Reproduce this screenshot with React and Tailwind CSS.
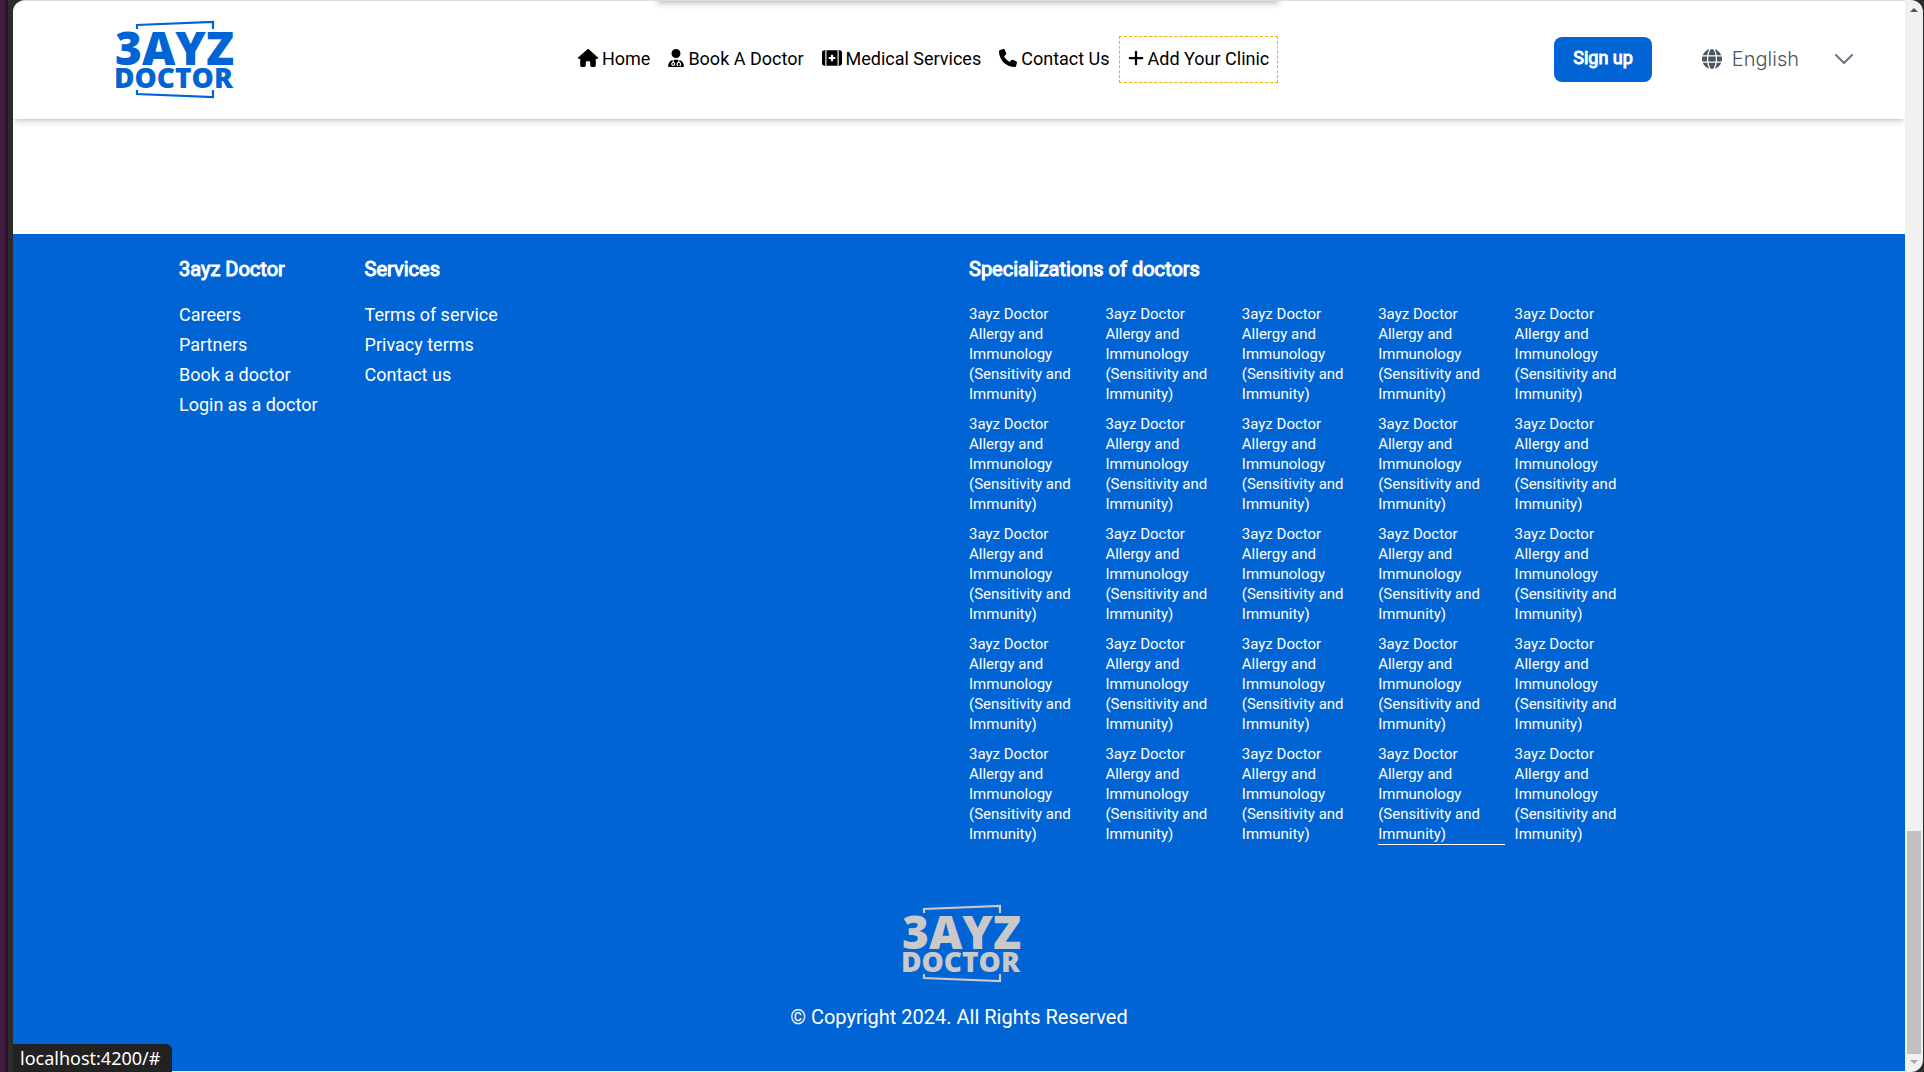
import React from "react";
import { FaHouse, FaUserDoctor, FaKitMedical, FaPhone, FaPlus, FaGlobe } from "react-icons/fa6";

const specializations = Array.from({ length: 25 }, (_, i) => ({
  id: i,
  label: "3ayz Doctor Allergy and Immunology (Sensitivity and Immunity)",
}));

function Logo({ className }) {
  return (
    <svg viewBox="0 0 126 80" className={className} role="img" aria-label="3ayz Doctor">
      <g fill="none" stroke="currentColor" strokeWidth="2.2">
        <path d="M28 10V6L104 3V10" />
        <path d="M28 71V75L104 78V71" />
      </g>
      <g fill="currentColor" fontFamily="'Open Sans', sans-serif" fontWeight="800">
        <text x="6" y="46" fontSize="46">3AYZ</text>
        <text x="5" y="69" fontSize="28">DOCTOR</text>
      </g>
    </svg>
  );
}

function NavLink({ icon: Icon, iconWidth, children, boxed }) {
  return (
    <a
      href="#"
      className={
        boxed
          ? "flex items-start gap-1 border border-dashed border-yellow-500 px-2 pt-2 pb-[10px]"
          : "flex items-start gap-1 px-[9px] pt-[9px] pb-[11px]"
      }
    >
      <span className="flex h-[27px] items-center">
        <Icon className={`h-[18px] ${iconWidth}`} />
      </span>
      <span className="leading-[27px]">{children}</span>
    </a>
  );
}

function Heading({ children }) {
  return (
    <h2 className="text-xl leading-[30px] [-webkit-text-stroke:1px_white]">{children}</h2>
  );
}

function LinkColumn({ title, links }) {
  return (
    <div>
      <Heading>{title}</Heading>
      <ul className="mt-4 text-lg leading-[30px]">
        {links.map((l) => (
          <li key={l}>
            <a href="#">{l}</a>
          </li>
        ))}
      </ul>
    </div>
  );
}

export default function App() {
  return (
    <div className="flex h-screen overflow-hidden bg-[#2c2c2c] pr-px font-['Roboto',sans-serif]">
      <div className="w-[13px] shrink-0 border-l-[5px] border-[#411d3d] bg-[#2c2c2c]">
        <div className="h-full w-[3px] bg-[#331030]" />
      </div>

      <div className="relative flex min-w-0 flex-1 flex-col overflow-hidden rounded-tl-xl border-t border-[#dcdcdc] bg-white">
        <div className="absolute -top-2 left-[642px] h-2 w-[626px] rounded-lg shadow-md shadow-black/20" />

        <header className="flex h-[118px] shrink-0 items-center justify-between pr-[52px] pb-[2px] pl-24 shadow-md shadow-black/15">
          <Logo className="h-20 w-[126px] overflow-visible text-[#0064d4]" />
          <nav className="ml-[58px] flex items-center text-lg text-black">
            <NavLink icon={FaHouse} iconWidth="w-5">Home</NavLink>
            <NavLink icon={FaUserDoctor} iconWidth="w-4">Book A Doctor</NavLink>
            <NavLink icon={FaKitMedical} iconWidth="w-5">Medical Services</NavLink>
            <NavLink icon={FaPhone} iconWidth="w-[18px]">Contact Us</NavLink>
            <NavLink icon={FaPlus} iconWidth="w-4" boxed>Add Your Clinic</NavLink>
          </nav>
          <div className="flex items-center gap-[50px]">
            <button
              type="button"
              className="h-[45px] rounded-lg bg-[#0064d4] px-[19px] pb-[2px] text-lg text-white [-webkit-text-stroke:1px_white]"
            >
              Sign up
            </button>
            <button type="button" className="flex items-center text-gray-600">
              <FaGlobe className="h-5 w-5" />
              <span className="ml-[10px] font-['Inter',sans-serif] text-xl leading-7 font-light">English</span>
              <svg
                viewBox="0 0 18 10"
                className="ml-9 h-[10px] w-[18px] text-gray-500"
                fill="none"
                stroke="currentColor"
                strokeWidth="2"
                strokeLinecap="round"
                strokeLinejoin="round"
              >
                <path d="M1 1L9 9L17 1" />
              </svg>
            </button>
          </div>
        </header>

        <main className="h-[115px] shrink-0" />

        <footer className="mb-px flex-1 bg-[#0064d4] px-10 pt-5 text-white">
          <div className="mx-auto grid max-w-[1560px] grid-cols-2 gap-5">
            <div className="flex gap-[47px]">
              <LinkColumn
                title="3ayz Doctor"
                links={["Careers", "Partners", "Book a doctor", "Login as a doctor"]}
              />
              <LinkColumn title="Services" links={["Terms of service", "Privacy terms", "Contact us"]} />
            </div>
            <div>
              <Heading>Specializations of doctors</Heading>
              <ul className="mt-5 grid max-w-[672px] grid-cols-5 gap-x-[10px] gap-y-[9px] text-[15px] leading-5">
                {specializations.map((s) => (
                  <li key={s.id}>
                    <a
                      href="#"
                      className={
                        s.id === 23 ? "block border-b border-white" : "block border-b border-transparent"
                      }
                    >
                      {s.label}
                    </a>
                  </li>
                ))}
              </ul>
            </div>
          </div>
          <div className="mt-[58px] flex flex-col items-center">
            <Logo className="h-20 w-[126px] overflow-visible text-[#c9c9c9]" />
            <p className="mt-5 text-xl leading-7">© Copyright 2024. All Rights Reserved</p>
          </div>
        </footer>

        <div className="absolute bottom-0 left-0 rounded-tr-md bg-[#222222] pr-3 pl-[7px] font-['Noto_Sans',sans-serif] text-lg leading-7 text-white">
          localhost:4200/#
        </div>
      </div>

      <div className="flex w-[18px] shrink-0 flex-col items-center justify-between rounded-r-xl bg-[#f1f1f1] py-2">
        <svg viewBox="0 0 8 4" className="h-1 w-2" fill="#505050">
          <path d="M0 4L4 0L8 4Z" />
        </svg>
        <div className="flex flex-col items-center gap-[6px]">
          <div className="h-[223px] w-[14px] bg-[#c1c1c1]" />
          <svg viewBox="0 0 8 4" className="h-1 w-2" fill="#a3a3a3">
            <path d="M0 0L4 4L8 0Z" />
          </svg>
        </div>
      </div>
    </div>
  );
}
